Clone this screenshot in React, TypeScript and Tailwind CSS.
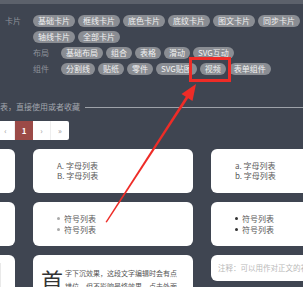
import React from 'react';

const cardTags = ['基础卡片', '框线卡片', '底色卡片', '底纹卡片', '图文卡片', '同步卡片', '轴线卡片', '全部卡片'];
const layoutTags = ['基础布局', '组合', '表格', '滑动', 'SVG互动'];
const partTags = ['分割线', '贴纸', '零件', 'SVG贴图', '视频', '表单组件'];

function Pill({ label }: { label: string }) {
  return (
    <span className="flex h-[12px] items-center whitespace-nowrap rounded-full bg-[#8a8d93] px-[5px] text-[8px] leading-none text-[#f1f1f1]">
      {label}
    </span>
  );
}

function TagRow({ title, tags, ghost }: { title: string; tags: string[]; ghost?: boolean }) {
  return (
    <div className="flex items-start">
      {ghost ? (
        <span className="ml-[-30px] h-[12px] w-[34px] rounded-full bg-[#8a8d93]" />
      ) : null}
      <span
        className={`${ghost ? 'ml-[29px]' : 'ml-[33px]'} w-[28px] shrink-0 text-[8px] leading-[12px] text-[#8e929a]`}
      >
        {title}
      </span>
      <div className="flex w-[270px] shrink-0 flex-wrap gap-x-[3px] gap-y-[4px]">
        {tags.map((t) => (
          <Pill key={t} label={t} />
        ))}
      </div>
    </div>
  );
}

function Card({ children, className = '' }: { children?: React.ReactNode; className?: string }) {
  return <div className={`rounded-[6px] bg-white ${className}`}>{children}</div>;
}

export default function App() {
  return (
    <div className="relative h-[287px] w-[303px] overflow-hidden bg-[#3f4551] font-['Noto_Sans_CJK_SC','Noto_Sans',sans-serif]">
      <div className="h-[4px] bg-[#5c616b]" />

      <div className="mt-[11px] flex flex-col gap-[4px]">
        <TagRow title="卡片" tags={cardTags} ghost />
        <TagRow title="布局" tags={layoutTags} />
        <TagRow title="组件" tags={partTags} />
      </div>

      <div className="mt-[27px] flex items-center">
        <span className="ml-[-24px] whitespace-nowrap text-[8px] leading-[10px] text-[#a2a6ad]">
          组件列表，直接使用或者收藏
        </span>
        <div className="ml-[5px] h-px flex-1 bg-[#9ea2a9]" />
      </div>

      <div className="ml-[-3px] mt-[9px] flex h-[19px] text-[8px] text-[#9a9a9a]">
        <span className="flex w-[18px] items-center justify-center border-r border-[#eee] bg-white">‹</span>
        <span className="flex w-[18px] items-center justify-center bg-[#9b4a47] font-bold text-white">1</span>
        <span className="flex w-[18px] items-center justify-center border-r border-[#eee] bg-white">›</span>
        <span className="flex w-[18px] items-center justify-center rounded-r-[2px] bg-white">»</span>
      </div>

      <div className="ml-[-145px] mt-[9px] grid grid-cols-[160px_160px_160px] grid-rows-[44px_44px_44px] gap-x-[18px] gap-y-[9px] text-[8px] text-[#5a5a5a]">
        <Card />
        <Card className="flex flex-col justify-center pl-[24px] leading-[10px]">
          <span>A. 字母列表</span>
          <span>B. 字母列表</span>
        </Card>
        <Card className="flex flex-col justify-center pl-[24px] leading-[10px]">
          <span>a. 字母列表</span>
          <span>b. 字母列表</span>
        </Card>

        <Card />
        <Card className="flex flex-col justify-center gap-[1px] pl-[24px] leading-[10px]">
          {[0, 1].map((i) => (
            <span key={i} className="flex items-center gap-[4px]">
              <span className="h-[3px] w-[3px] rounded-full bg-[#aaa]" />
              符号列表
            </span>
          ))}
        </Card>
        <Card className="flex flex-col justify-center gap-[1px] pl-[24px] leading-[10px]">
          {[0, 1].map((i) => (
            <span key={i} className="flex items-center gap-[4px]">
              <span className="h-[3px] w-[3px] rounded-full bg-[#333]" />
              符号列表
            </span>
          ))}
        </Card>

        <Card className="flex items-start pl-[140px] pt-[8px]">
          <span className="h-[30px] w-[6px] bg-[#e9e9e9]" />
        </Card>
        <Card className="pl-[8px] pr-[10px] pt-[12px]">
          <span className="float-left mr-[2px] h-[27px] text-[22px] leading-[24px] text-[#333]">首</span>
          <p className="text-[7px] leading-[13px] text-[#555]">
            字下沉效果，这段文字编辑时会有点错位，但不影响最终效果，点击外面就会恢复
          </p>
        </Card>
        <Card className="flex h-[26px] items-center self-start pl-[7px] text-[7.5px] text-[#b9b9b9]">
          注释：可以用作对正文的补充说明
        </Card>
      </div>

      <svg className="pointer-events-none absolute inset-0" width="303" height="287" viewBox="0 0 303 287">
        <rect x="190.5" y="58.5" width="39" height="22" fill="none" stroke="#ee2c27" strokeWidth="3" />
        <polygon points="105.5,222 106.8,222.6 190.6,94.5 188.2,92.9" fill="#ee2c27" />
        <polygon points="196,84 192.5,101 181.5,94" fill="#ee2c27" />
      </svg>
    </div>
  );
}
